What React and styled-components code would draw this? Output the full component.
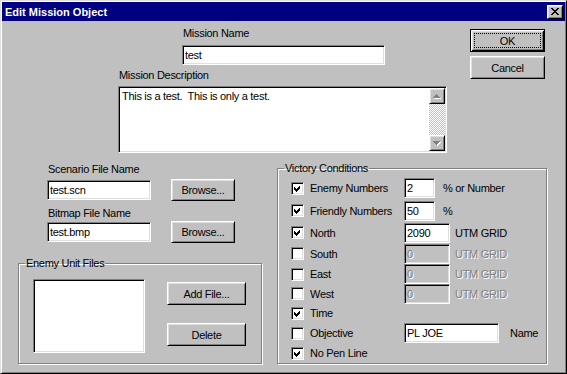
import React from "react";
import styled, { createGlobalStyle, css } from "styled-components";

const GlobalStyle = createGlobalStyle`
  html, body {
    margin: 0;
    padding: 0;
    background: #c0c0c0;
  }
  body {
    font-family: "Liberation Sans", Arial, sans-serif;
  }
`;

// win95 bevels
const raised = css`
  border: 1px solid;
  border-color: #fff #000 #000 #fff;
  box-shadow: inset 1px 1px #dfdfdf, inset -1px -1px #808080;
`;

const sunken = css`
  border: 1px solid;
  border-color: #808080 #fff #fff #808080;
  box-shadow: inset 1px 1px #000, inset -1px -1px #dfdfdf;
`;

const Window = styled.div`
  width: 567px;
  height: 374px;
  box-sizing: border-box;
  display: flex;
  flex-direction: column;
  padding: 1px;
  background: #c0c0c0;
  border: 1px solid;
  border-color: #dfdfdf #000 #000 #dfdfdf;
  box-shadow: inset 1px 1px #fff, inset -1px -1px #808080;
  font-size: 11px;
  letter-spacing: -0.3px;
  color: #000;
`;

const TitleBar = styled.div`
  height: 19px;
  flex: none;
  display: flex;
  align-items: center;
  justify-content: space-between;
  padding: 0 2px 0 3px;
  background: #000080;
  color: #fff;
`;

const Title = styled.span`
  font-weight: bold;
  font-size: 11px;
  letter-spacing: 0;
`;

const CloseButton = styled.div`
  width: 16px;
  height: 14px;
  box-sizing: border-box;
  display: flex;
  align-items: center;
  justify-content: center;
  background: #c0c0c0;
  ${raised}
`;

const TopSection = styled.div`
  display: flex;
  align-items: flex-start;
`;

const MissionColumn = styled.div`
  display: flex;
  flex-direction: column;
  align-items: flex-start;
  width: 329px;
  margin: 6px 0 0 116px;
`;

const Label = styled.span`
  display: block;
  line-height: 13px;
  white-space: nowrap;
  margin-left: ${(p) => p.$x || 0}px;
  margin-top: ${(p) => p.$y || 0}px;
`;

const Field = styled.div`
  box-sizing: border-box;
  flex: none;
  width: ${(p) => p.$w}px;
  height: 20px;
  display: flex;
  align-items: center;
  padding: 0 2px;
  margin-left: ${(p) => p.$x || 0}px;
  margin-top: ${(p) => p.$y || 0}px;
  white-space: nowrap;
  background: ${(p) => (p.$disabled ? "#c0c0c0" : "#fff")};
  color: ${(p) => (p.$disabled ? "#808080" : "#000")};
  text-shadow: ${(p) => (p.$disabled ? "1px 1px #fff" : "none")};
  ${sunken}
`;

const DescBox = styled.div`
  box-sizing: border-box;
  width: 329px;
  height: 67px;
  margin-top: 4px;
  display: flex;
  padding: 1px;
  background: #fff;
  ${sunken}
`;

const DescText = styled.div`
  flex: 1;
  padding: 2px 2px;
  line-height: 13px;
  white-space: pre;
`;

const ScrollBar = styled.div`
  width: 16px;
  display: flex;
  flex-direction: column;
`;

const ScrollButton = styled.div`
  box-sizing: border-box;
  height: 16px;
  display: flex;
  align-items: center;
  justify-content: center;
  background: #c0c0c0;
  ${raised}
`;

const Track = styled.div`
  flex: 1;
  background-image: conic-gradient(#fff 25%, #c0c0c0 0 50%, #fff 0 75%, #c0c0c0 0);
  background-size: 2px 2px;
`;

const ButtonColumn = styled.div`
  display: flex;
  flex-direction: column;
  gap: 4px;
  margin: 8px 0 0 23px;
`;

const Button = styled.button`
  box-sizing: border-box;
  flex: none;
  width: ${(p) => p.$w}px;
  height: ${(p) => p.$h || 23}px;
  margin: 0;
  margin-left: ${(p) => p.$x || 0}px;
  padding: 0;
  font-family: "Liberation Sans", Arial, sans-serif;
  font-size: 11px;
  letter-spacing: -0.3px;
  color: #000;
  background: #c0c0c0;
  ${raised}
  ${(p) =>
    p.$default &&
    css`
      border-color: #000;
      box-shadow: inset 1px 1px #fff, inset -1px -1px #000, inset 2px 2px #dfdfdf,
        inset -2px -2px #808080;
      outline: 1px dotted #000;
      outline-offset: -5px;
    `}
`;

const BottomSection = styled.div`
  display: flex;
  align-items: flex-start;
`;

const LeftColumn = styled.div`
  width: 260px;
  display: flex;
  flex-direction: column;
  align-items: flex-start;
`;

const FileRow = styled.div`
  display: flex;
  align-items: center;
  height: 22px;
  margin-top: ${(p) => p.$y}px;
  padding-left: 45px;
`;

const GroupBox = styled.fieldset`
  box-sizing: border-box;
  margin: 0;
  min-width: 0;
  width: ${(p) => p.$w}px;
  height: ${(p) => p.$h}px;
  margin-left: ${(p) => p.$x || 0}px;
  margin-top: ${(p) => p.$y || 0}px;
  padding: 0 6px;
  border: 1px solid #808080;
  box-shadow: inset 1px 1px #fff, 1px 1px #fff;
`;

const Legend = styled.legend`
  padding: 0 1px;
  line-height: 13px;
  font-size: 11px;
`;

const EnemyContent = styled.div`
  display: flex;
  align-items: flex-start;
  padding: 9px 0 0 8px;
`;

const ListBox = styled.div`
  box-sizing: border-box;
  width: 112px;
  height: 74px;
  background: #fff;
  ${sunken}
`;

const ListButtons = styled.div`
  display: flex;
  flex-direction: column;
  gap: 18px;
  margin-left: 22px;
  padding-top: 3px;
`;

const VictoryRows = styled.div`
  display: grid;
  grid-template-rows: 22px 23px 21px 21px 20px 19px 20px 20px 20px;
  align-items: center;
  padding: 2px 0 0 7px;
`;

const Row = styled.div`
  display: flex;
  align-items: center;
  height: 20px;
`;

const CheckLabel = styled.div`
  width: 113px;
  flex: none;
  display: flex;
  align-items: center;
  gap: 6px;
  white-space: nowrap;
`;

const CheckBox = styled.div`
  box-sizing: border-box;
  width: 13px;
  height: 13px;
  flex: none;
  display: flex;
  align-items: center;
  justify-content: center;
  background: #fff;
  ${sunken}
`;

const Suffix = styled.span`
  margin-left: ${(p) => p.$x}px;
  white-space: nowrap;
  color: ${(p) => (p.$disabled ? "#808080" : "#000")};
  text-shadow: ${(p) => (p.$disabled ? "1px 1px #fff" : "none")};
`;

function CloseGlyph() {
  return (
    <svg width="8" height="7" viewBox="0 0 8 7" shapeRendering="crispEdges">
      <path
        fill="#000"
        d="M0 0h2v1h-2z M6 0h2v1h-2z M1 1h2v1h-2z M5 1h2v1h-2z M2 2h4v1h-4z M3 3h2v1h-2z M2 4h4v1h-4z M1 5h2v1h-2z M5 5h2v1h-2z M0 6h2v1h-2z M6 6h2v1h-2z"
      />
    </svg>
  );
}

function Arrow({ down }) {
  const d = down
    ? "M0 0h7v1h-7z M1 1h5v1h-5z M2 2h3v1h-3z M3 3h1v1h-1z"
    : "M3 0h1v1h-1z M2 1h3v1h-3z M1 2h5v1h-5z M0 3h7v1h-7z";
  return (
    <svg width="8" height="5" viewBox="0 0 8 5" shapeRendering="crispEdges">
      <path d={d} fill="#fff" transform="translate(1 1)" />
      <path d={d} fill="#808080" />
    </svg>
  );
}

function Check() {
  return (
    <svg width="7" height="7" viewBox="0 0 7 7" shapeRendering="crispEdges">
      <path fill="#000" d="M6 0v3l-4 4l-2-2v-3l2 2z" />
    </svg>
  );
}

const conditions = [
  { label: "Enemy Numbers", checked: true, value: "2", w: 31, suffix: "% or Number", sx: 8 },
  { label: "Friendly Numbers", checked: true, value: "50", w: 31, suffix: "%", sx: 8 },
  { label: "North", checked: true, value: "2090", w: 46, suffix: "UTM GRID", sx: 5 },
  { label: "South", checked: false, value: "0", w: 46, suffix: "UTM GRID", sx: 5, disabled: true },
  { label: "East", checked: false, value: "0", w: 46, suffix: "UTM GRID", sx: 5, disabled: true },
  { label: "West", checked: false, value: "0", w: 46, suffix: "UTM GRID", sx: 5, disabled: true },
  { label: "Time", checked: true },
  { label: "Objective", checked: false, value: "PL JOE", w: 95, suffix: "Name", sx: 11 },
  { label: "No Pen Line", checked: true },
];

export default function App() {
  return (
    <>
      <GlobalStyle />
      <Window>
        <TitleBar>
          <Title>Edit Mission Object</Title>
          <CloseButton>
            <CloseGlyph />
          </CloseButton>
        </TitleBar>

        <TopSection>
          <MissionColumn>
            <Label $x={65}>Mission Name</Label>
            <Field $w={203} $x={64} $y={5}>test</Field>
            <Label $x={1} $y={4}>Mission Description</Label>
            <DescBox>
              <DescText>This is a test.  This is only a test.</DescText>
              <ScrollBar>
                <ScrollButton>
                  <Arrow />
                </ScrollButton>
                <Track />
                <ScrollButton>
                  <Arrow down />
                </ScrollButton>
              </ScrollBar>
            </DescBox>
          </MissionColumn>
          <ButtonColumn>
            <Button $w={75} $default>OK</Button>
            <Button $w={75}>Cancel</Button>
          </ButtonColumn>
        </TopSection>

        <BottomSection>
          <LeftColumn>
            <Label $x={46} $y={10}>Scenario File Name</Label>
            <FileRow $y={3}>
              <Field $w={104}>test.scn</Field>
              <Button $w={64} $h={22} $x={20}>Browse...</Button>
            </FileRow>
            <Label $x={46} $y={6}>Bitmap File Name</Label>
            <FileRow $y={1}>
              <Field $w={104}>test.bmp</Field>
              <Button $w={64} $h={22} $x={20}>Browse...</Button>
            </FileRow>
            <GroupBox $w={244} $h={107} $x={16} $y={14}>
              <Legend>Enemy Unit Files</Legend>
              <EnemyContent>
                <ListBox />
                <ListButtons>
                  <Button $w={79}>Add File...</Button>
                  <Button $w={79}>Delete</Button>
                </ListButtons>
              </EnemyContent>
            </GroupBox>
          </LeftColumn>

          <GroupBox $w={270} $h={202} $x={15} $y={9}>
            <Legend>Victory Conditions</Legend>
            <VictoryRows>
              {conditions.map((c) => (
                <Row key={c.label}>
                  <CheckLabel>
                    <CheckBox>{c.checked && <Check />}</CheckBox>
                    {c.label}
                  </CheckLabel>
                  {c.value !== undefined && (
                    <Field $w={c.w} $disabled={c.disabled}>
                      {c.value}
                    </Field>
                  )}
                  {c.suffix && (
                    <Suffix $x={c.sx} $disabled={c.disabled}>
                      {c.suffix}
                    </Suffix>
                  )}
                </Row>
              ))}
            </VictoryRows>
          </GroupBox>
        </BottomSection>
      </Window>
    </>
  );
}
